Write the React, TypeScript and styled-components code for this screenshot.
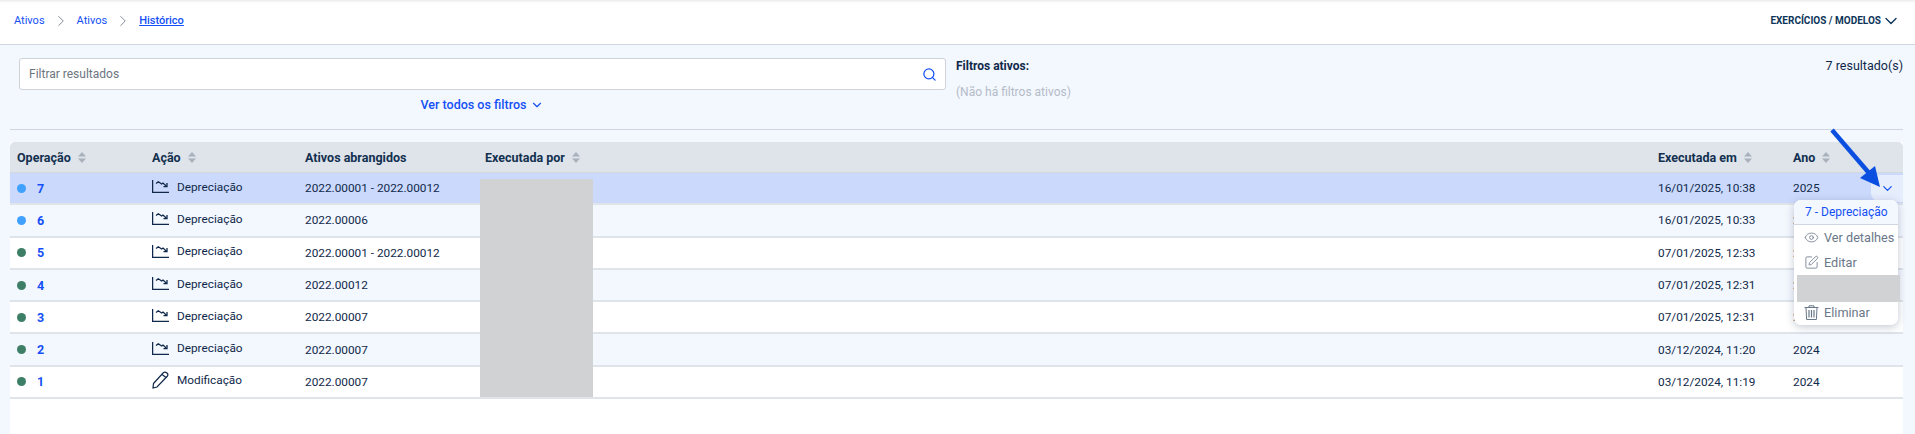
import React from 'react'
import styled, { createGlobalStyle } from 'styled-components'
import { ChevronDown, ChevronRight, Eye, Search, SquarePen } from 'lucide-react'

const BLUE = '#1450f5'
const TEXT = '#10294a'
const MUTED = '#6a7789'

const GlobalStyles = createGlobalStyle`
  html, body {
    margin: 0;
    padding: 0;
    background: #f3f7fe;
  }
  body, body * {
    box-sizing: border-box;
    font-family: Roboto, "Liberation Sans", sans-serif;
  }
`

const Page = styled.div`
  position: relative;
  width: 1915px;
  height: 434px;
  overflow: hidden;
  display: flex;
  flex-direction: column;
  color: ${TEXT};
`

const TopBar = styled.header`
  height: 45px;
  flex: none;
  display: flex;
  align-items: center;
  justify-content: space-between;
  padding: 0 14px 3px 14px;
  background: #fff;
  border-bottom: 1px solid #cfd6e2;
  box-shadow: inset 0 3px 3px -2px rgba(0, 0, 0, 0.1);
`

const Crumbs = styled.nav`
  display: flex;
  align-items: center;
  gap: 7px;
  font-size: 11px;
  color: ${BLUE};
`

const CurrentCrumb = styled.span`
  font-weight: 500;
  text-decoration: underline;
`

const ModelsMenu = styled.div`
  display: flex;
  align-items: center;
  font-size: 10px;
  font-weight: 700;
  color: #0d3559;
`

const FilterArea = styled.section`
  flex: none;
  height: 85px;
  margin: 0 12px 0 10px;
  padding: 13px 0 0 9px;
  display: flex;
  border-bottom: 1px solid #cfd6e2;
`

const SearchColumn = styled.div`
  width: 927px;
  display: flex;
  flex-direction: column;
  align-items: center;
`

const SearchBox = styled.div`
  width: 100%;
  height: 32px;
  display: flex;
  align-items: center;
  justify-content: space-between;
  padding: 0 8px 0 9px;
  background: #fff;
  border: 1px solid #cfd3d9;
  border-radius: 3px;
  font-size: 12px;
  color: #6d7580;
`

const AllFilters = styled.div`
  display: flex;
  align-items: center;
  gap: 4px;
  margin-top: 7px;
  font-size: 12.5px;
  font-weight: 500;
  color: ${BLUE};
`

const ActiveFilters = styled.div`
  flex: 1;
  margin-left: 10px;
  font-size: 12px;
`

const ActiveTitle = styled.div`
  font-weight: 700;
  line-height: 16px;
`

const NoFilters = styled.div`
  margin-top: 10px;
  line-height: 16px;
  color: #b4bcc8;
`

const ResultCount = styled.div`
  font-size: 12.5px;
  line-height: 16px;
`

const TableArea = styled.main`
  position: relative;
  flex: 1;
  margin: 12px 12px 0 10px;
  background: #fff;
`

const Table = styled.table`
  width: 100%;
  border-collapse: separate;
  border-spacing: 0;
  table-layout: fixed;
  font-size: 11.8px;
`

const HeadCell = styled.th<{ $width?: number }>`
  width: ${(p) => (p.$width ? `${p.$width}px` : 'auto')};
  height: 31px;
  padding: 0 0 0 9px;
  background: #dfe3ea;
  border-bottom: 1px solid #d3d7de;
  text-align: left;
  font-size: 12.5px;
  font-weight: 700;
  color: #12304f;

  &:first-child {
    padding-left: 7px;
    border-top-left-radius: 5px;
  }
  &:last-child {
    border-top-right-radius: 5px;
  }
`

const HeadLabel = styled.span`
  display: inline-flex;
  align-items: center;
  gap: 7px;
`

const SortIcon = () => (
  <svg width="8" height="11" viewBox="0 0 8 11" fill="#a9b1bd">
    <path d="M4 0 L8 4.5 H0 Z M4 11 L0 6.5 H8 Z" />
  </svg>
)

const Row = styled.tr<{ $bg: string }>`
  background: ${(p) => p.$bg};
`

const Cell = styled.td`
  height: 32.3px;
  padding: 0 0 0 9px;
  border-bottom: 2px solid #dfe3ea;
  white-space: nowrap;

  &:first-child {
    padding-left: 7px;
  }
`

const OperationCell = styled.div`
  display: flex;
  align-items: center;
  gap: 11px;
`

const Dot = styled.span<{ $color: string }>`
  width: 9px;
  height: 9px;
  border-radius: 50%;
  background: ${(p) => p.$color};
`

const OperationId = styled.span`
  font-weight: 700;
  font-size: 12.5px;
  color: ${BLUE};
`

const ActionCell = styled.div`
  display: flex;
  align-items: center;
  gap: 8px;
  margin-top: -3px;
`

const RowToggle = styled.div`
  position: absolute;
  top: 33px;
  right: 0;
  width: 32px;
  height: 27px;
  display: flex;
  align-items: center;
  justify-content: center;
  background: #e6edfd;
  border-radius: 9px 0 0 9px;
  color: ${BLUE};
`

const Menu = styled.div`
  position: absolute;
  top: 58px;
  left: 1784px;
  width: 104px;
  height: 125px;
  background: #fff;
  border-radius: 7px;
  box-shadow: 0 2px 8px rgba(40, 60, 90, 0.28);
  font-size: 12.7px;
  color: ${MUTED};
`

const MenuTitle = styled.div`
  height: 25px;
  padding: 1px 0 0 11px;
  line-height: 22px;
  font-size: 12px;
  color: ${BLUE};
  background: #f3f7fe;
  border-bottom: 1px solid #cfd6e2;
  border-radius: 7px 7px 0 0;
`

const MenuItem = styled.div`
  height: 25px;
  display: flex;
  align-items: center;
  gap: 5px;
  padding-left: 10px;
`

const Redaction = styled.div`
  position: absolute;
  background: #d1d2d4;
`

const TableRedaction = styled(Redaction)`
  left: 470px;
  top: 37px;
  width: 113px;
  height: 218px;
`

const MenuRedaction = styled(Redaction)`
  left: 3px;
  top: 75px;
  width: 103px;
  height: 27px;
`

const Arrow = styled.svg`
  position: absolute;
  left: 1825px;
  top: 125px;
`

const DepreciationIcon = () => (
  <svg width="17" height="13" viewBox="0 0 17 13" fill="none" stroke={TEXT} strokeWidth="1.3">
    <path d="M0.6 0 V12.4 H17" />
    <path d="M4 3.5 L6.3 1.7 L9.7 4 L11 3 L14.5 6.3" />
    <path d="M15 3 V6.6 H11.5" />
  </svg>
)

const PencilIcon = () => (
  <svg width="17" height="18" viewBox="0 0 17 18" fill="none" stroke={TEXT} strokeWidth="1.2">
    <path d="M1.5 12.5 L11.5 1.5 Q13 0.5 15 2 Q16.5 3.5 15.5 5 L5 16 L1 17 Z" />
    <path d="M10 3.5 L14 6.5" />
  </svg>
)

const TrashIcon = () => (
  <svg width="15" height="15" viewBox="0 0 15 15" fill="none" stroke={MUTED} strokeWidth="1">
    <path d="M0.5 2.5 H14.5 M5 2.5 V0.8 H10 V2.5" />
    <path d="M2 2.5 L2.6 14.5 H12.4 L13 2.5" />
    <path d="M5 5 V12.5 M7.5 5 V12.5 M10 5 V12.5" strokeWidth="1.2" />
  </svg>
)

const ROWS = [
  { id: 7, action: 'Depreciação', assets: '2022.00001 - 2022.00012', at: '16/01/2025, 10:38', year: '2025', dot: '#3fa0ff', bg: '#cbd9fc' },
  { id: 6, action: 'Depreciação', assets: '2022.00006', at: '16/01/2025, 10:33', year: '2025', dot: '#3fa0ff', bg: '#f3f7fe' },
  { id: 5, action: 'Depreciação', assets: '2022.00001 - 2022.00012', at: '07/01/2025, 12:33', year: '2025', dot: '#3d7f66', bg: '#fff' },
  { id: 4, action: 'Depreciação', assets: '2022.00012', at: '07/01/2025, 12:31', year: '2025', dot: '#3d7f66', bg: '#f3f7fe' },
  { id: 3, action: 'Depreciação', assets: '2022.00007', at: '07/01/2025, 12:31', year: '2025', dot: '#3d7f66', bg: '#fff' },
  { id: 2, action: 'Depreciação', assets: '2022.00007', at: '03/12/2024, 11:20', year: '2024', dot: '#3d7f66', bg: '#f3f7fe' },
  { id: 1, action: 'Modificação', assets: '2022.00007', at: '03/12/2024, 11:19', year: '2024', dot: '#3d7f66', bg: '#fff' },
]

export default function App() {
  return (
    <Page>
      <GlobalStyles />

      <TopBar>
        <Crumbs>
          <span>Ativos</span>
          <ChevronRight size={18} strokeWidth={1} color="#5b6675" />
          <span>Ativos</span>
          <ChevronRight size={18} strokeWidth={1} color="#5b6675" />
          <CurrentCrumb>Histórico</CurrentCrumb>
        </Crumbs>
        <ModelsMenu>
          EXERCÍCIOS / MODELOS
          <ChevronDown size={20} strokeWidth={1.6} />
        </ModelsMenu>
      </TopBar>

      <FilterArea>
        <SearchColumn>
          <SearchBox>
            Filtrar resultados
            <Search size={15} color={BLUE} />
          </SearchBox>
          <AllFilters>
            Ver todos os filtros
            <ChevronDown size={14} />
          </AllFilters>
        </SearchColumn>
        <ActiveFilters>
          <ActiveTitle>Filtros ativos:</ActiveTitle>
          <NoFilters>(Não há filtros ativos)</NoFilters>
        </ActiveFilters>
        <ResultCount>7 resultado(s)</ResultCount>
      </FilterArea>

      <TableArea>
        <Table>
          <thead>
            <tr>
              <HeadCell $width={133}><HeadLabel>Operação <SortIcon /></HeadLabel></HeadCell>
              <HeadCell $width={153}><HeadLabel>Ação <SortIcon /></HeadLabel></HeadCell>
              <HeadCell $width={180}><HeadLabel>Ativos abrangidos</HeadLabel></HeadCell>
              <HeadCell><HeadLabel>Executada por <SortIcon /></HeadLabel></HeadCell>
              <HeadCell $width={135}><HeadLabel>Executada em <SortIcon /></HeadLabel></HeadCell>
              <HeadCell $width={119}><HeadLabel>Ano <SortIcon /></HeadLabel></HeadCell>
            </tr>
          </thead>
          <tbody>
            {ROWS.map((row) => (
              <Row key={row.id} $bg={row.bg}>
                <Cell>
                  <OperationCell>
                    <Dot $color={row.dot} />
                    <OperationId>{row.id}</OperationId>
                  </OperationCell>
                </Cell>
                <Cell>
                  <ActionCell>
                    {row.action === 'Modificação' ? <PencilIcon /> : <DepreciationIcon />}
                    {row.action}
                  </ActionCell>
                </Cell>
                <Cell>{row.assets}</Cell>
                <Cell />
                <Cell>{row.at}</Cell>
                <Cell>{row.year}</Cell>
              </Row>
            ))}
          </tbody>
        </Table>

        <TableRedaction />
        <RowToggle>
          <ChevronDown size={15} />
        </RowToggle>
        <Menu>
          <MenuTitle>7 - Depreciação</MenuTitle>
          <MenuItem><Eye size={15} strokeWidth={1.3} /> Ver detalhes</MenuItem>
          <MenuItem><SquarePen size={15} strokeWidth={1.3} /> Editar</MenuItem>
          <MenuItem />
          <MenuItem><TrashIcon /> Eliminar</MenuItem>
          <MenuRedaction />
        </Menu>
      </TableArea>

      <Arrow width="70" height="75" viewBox="0 0 70 75">
        <path d="M7 5 L44 48" stroke="#0a4fe0" strokeWidth="4.5" fill="none" />
        <path d="M55 62 L35 53 L50 41 Z" fill="#0a4fe0" />
      </Arrow>
    </Page>
  )
}
